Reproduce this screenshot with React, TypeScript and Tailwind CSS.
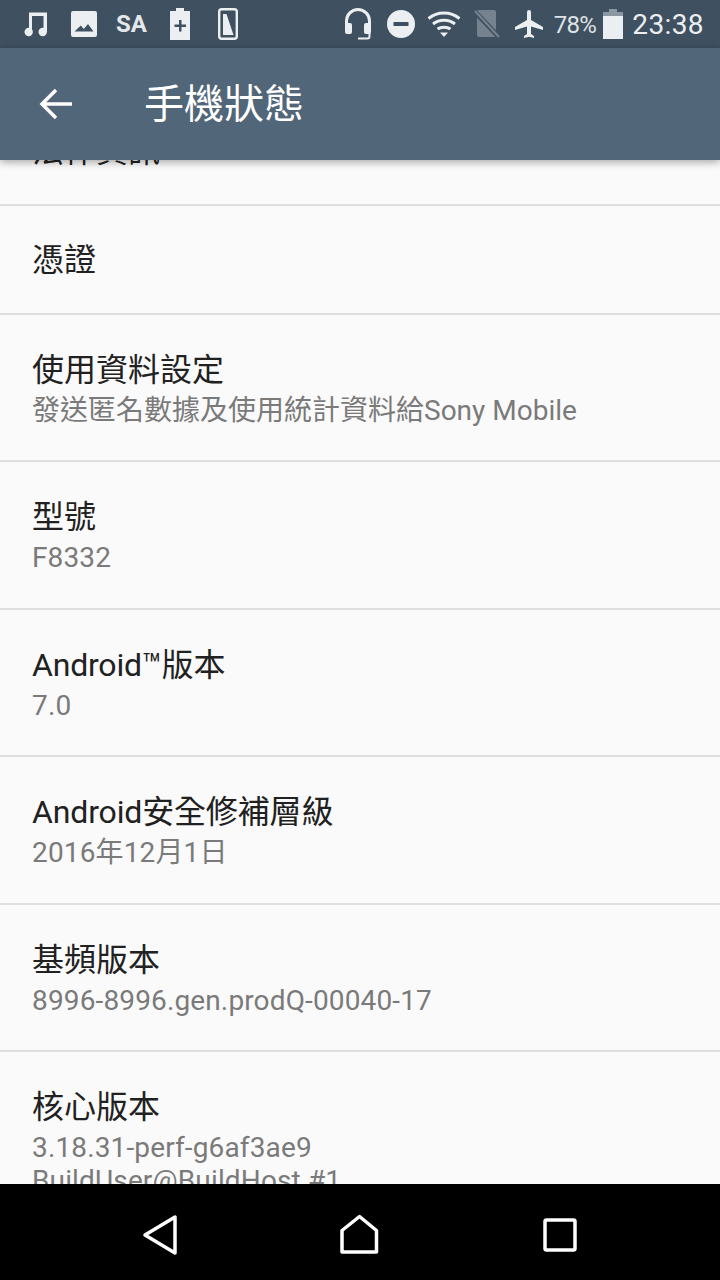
const FONT = "font-['Roboto','Noto_Sans_CJK_TC',sans-serif]";

const rows = [
  { title: "法律資訊" },
  { title: "憑證" },
  { title: "使用資料設定", sub: "發送匿名數據及使用統計資料給Sony Mobile", subClass: "tracking-normal" },
  { title: "型號", sub: "F8332" },
  { title: "Android™版本", sub: "7.0", titleClass: "tracking-[-0.2px]" },
  { title: "Android安全修補層級", sub: "2016年12月1日", titleClass: "tracking-[-0.15px]" },
  { title: "基頻版本", sub: "8996-8996.gen.prodQ-00040-17" },
  { title: "核心版本", sub: "3.18.31-perf-g6af3ae9", sub2: "BuildUser@BuildHost #1" },
];

function StatusBar() {
  return (
    <div className="flex h-12 shrink-0 items-center justify-between bg-[#3f5060] pl-6 pr-4 text-[#eceff1]">
      <div className="flex items-center">
        {/* music */}
        <svg width="24" height="26" viewBox="0 0 24 26" className="fill-current">
          <path d="M5 1.500h18V21h-3.500V5H8v16H5z" />
          <circle cx="4.700" cy="21" r="4.200" />
          <circle cx="18.700" cy="21" r="4.200" />
        </svg>
        {/* picture */}
        <svg width="26" height="26" viewBox="0 0 26 26" className="ml-[23px] fill-current">
          <path fillRule="evenodd" d="M2 0h22a2 2 0 0 1 2 2v22a2 2 0 0 1-2 2H2a2 2 0 0 1-2-2V2a2 2 0 0 1 2-2zM3.500 20.500h19l-5.500-7.500-4.200 5-3-3.500z" />
        </svg>
        <span className="ml-[19px] text-[24px] leading-none font-bold font-['Roboto',sans-serif] text-[#e4e8ea]">SA</span>
        {/* battery plus */}
        <svg width="20" height="32" viewBox="0 0 20 32" className="ml-[23px] fill-current">
          <path fillRule="evenodd" d="M6 0h8v3h6v29H0V3h6zM9 12v4.500H4.500v2.500H9v4.500h2.500V19H16v-2.500h-4.500V12z" />
        </svg>
        {/* sim / screen */}
        <svg width="20" height="32" viewBox="0 0 20 32" className="ml-[28px]">
          <rect x="1.200" y="1.200" width="17.600" height="29.600" rx="2.500" fill="none" stroke="currentColor" strokeWidth="2.400" />
          <path d="M5 6h3.500l7 21H5z" fill="currentColor" />
        </svg>
      </div>
      <div className="flex items-center">
        {/* headset */}
        <svg width="28" height="32" viewBox="0 0 28 32" className="fill-none stroke-current">
          <path d="M2.500 19v-6a11.500 11.500 0 0 1 23 0v6" strokeWidth="3" />
          <rect x="1" y="15" width="7" height="11" rx="2" className="fill-current stroke-none" />
          <rect x="20" y="15" width="7" height="11" rx="2" className="fill-current stroke-none" />
          <path d="M25.500 25v3.500a2 2 0 0 1-2 2H14" strokeWidth="2" />
        </svg>
        {/* do not disturb */}
        <svg width="30" height="30" viewBox="0 0 30 30" className="ml-[14px] fill-current">
          <path fillRule="evenodd" d="M15 1a14 14 0 1 1 0 28 14 14 0 0 1 0-28zM7.500 13v4h15v-4z" />
        </svg>
        {/* wifi */}
        <svg width="34" height="30" viewBox="0 0 34 30" className="ml-[11px] fill-none stroke-current" strokeWidth="3">
          <path d="M1.500 9.500c9-7.500 22-7.500 31 0" />
          <path d="M6 15c6.500-5 15.500-5 22 0" />
          <path d="M10.500 20c3.500-2.500 9.500-2.500 13 0" />
          <path d="M13 23.500h8L17 28z" className="fill-current stroke-none" />
        </svg>
        {/* no sim */}
        <svg width="28" height="30" viewBox="0 0 28 30" className="ml-[12px]">
          <path d="M6 1h15a2 2 0 0 1 2 2v23a2 2 0 0 1-2 2H6a2 2 0 0 1-2-2V3a2 2 0 0 1 2-2z" fill="#76838f" />
          <path d="M1 2l25 26" stroke="#3f5060" strokeWidth="5" />
          <path d="M2 2l24 26" stroke="#76838f" strokeWidth="2" />
        </svg>
        {/* airplane */}
        <svg width="30" height="30" viewBox="0 0 30 30" className="ml-[13px] fill-current">
          <path d="M13 3a2 2 0 0 1 4 0v8l12 7v3l-12-3.500V25l3 2v2l-5-1.300L10 29v-2l3-2v-7.500L1 21v-3l12-7z" />
        </svg>
        <span className="ml-[10px] mt-[2px] text-[24px] leading-none tracking-[-0.7px] font-['Roboto',sans-serif] text-[#dfe3e6]">78%</span>
        <svg width="20" height="30" viewBox="0 0 20 30" className="ml-[7px]">
          <path d="M6 0h8v3h6v6H0V3h6z" fill="#8b98a3" />
          <rect y="7" width="20" height="23" fill="currentColor" />
        </svg>
        <span className="ml-[9px] mt-[2px] text-[28px] leading-none tracking-[0.4px] font-['Roboto',sans-serif]">23:38</span>
      </div>
    </div>
  );
}

type RowProps = { title: string; sub?: string; sub2?: string; subClass?: string; titleClass?: string };

function Row({ title, sub, sub2, subClass, titleClass }: RowProps) {
  return (
    <div className={`shrink-0 border-b-2 border-[#dedede] px-8 ${sub ? "h-[147.400px] pt-[35px]" : "h-[109px] pt-[34px]"}`}>
      <div className={`text-[32px] leading-[40px] text-[#212121] ${titleClass ?? ""}`}>{title}</div>
      {sub && <div className={`mt-[1px] text-[28px] leading-[40px] text-[#7a7a7a] ${subClass ?? "tracking-[0.14px]"}`}>{sub}</div>}
      {sub2 && <div className="-mt-[7px] text-[28px] leading-[40px] tracking-[0.14px] text-[#7a7a7a]">{sub2}</div>}
    </div>
  );
}

export default function App() {
  return (
    <div className={`flex h-[1280px] w-[720px] flex-col overflow-hidden bg-[#fafafa] ${FONT}`}>
      <StatusBar />
      {/* App bar */}
      <div className="relative z-10 flex h-[112px] shrink-0 items-center bg-[#52667a] shadow-[0_2px_8px_rgba(0,0,0,0.35)]">
        <svg width="36" height="36" viewBox="0 0 36 36" className="ml-[38px] fill-none stroke-white" strokeWidth="3.500">
          <path d="M34 18H4M18 4L4 18l14 14" />
        </svg>
        <h1 className="ml-[70px] mt-[2px] text-[40px] leading-none font-normal text-white">手機狀態</h1>
      </div>
      {/* List, scrolled part way down */}
      <div className="min-h-0 flex-1 overflow-hidden">
        <div className="-mt-[63px] flex flex-col">
          {rows.map((r) => (
            <Row key={r.title} {...r} />
          ))}
        </div>
      </div>
      {/* Navigation bar */}
      <div className="relative z-10 flex h-24 shrink-0 items-center bg-black pt-[6px]">
        <svg width="40" height="44" viewBox="0 0 40 44" className="ml-[140px] fill-none stroke-white" strokeWidth="3.500" strokeLinejoin="round">
          <path d="M35 4v36L5 22z" />
        </svg>
        <svg width="44" height="44" viewBox="0 0 44 44" className="ml-[158px] fill-none stroke-white" strokeWidth="3.500" strokeLinejoin="round">
          <path d="M4 39V17.500L21.500 3.500 38.500 17.500V39z" />
        </svg>
        <svg width="36" height="36" viewBox="0 0 36 36" className="ml-[160px] fill-none stroke-white" strokeWidth="3.500" strokeLinejoin="round">
          <rect x="3" y="3" width="30" height="30" rx="1.500" />
        </svg>
      </div>
    </div>
  );
}
